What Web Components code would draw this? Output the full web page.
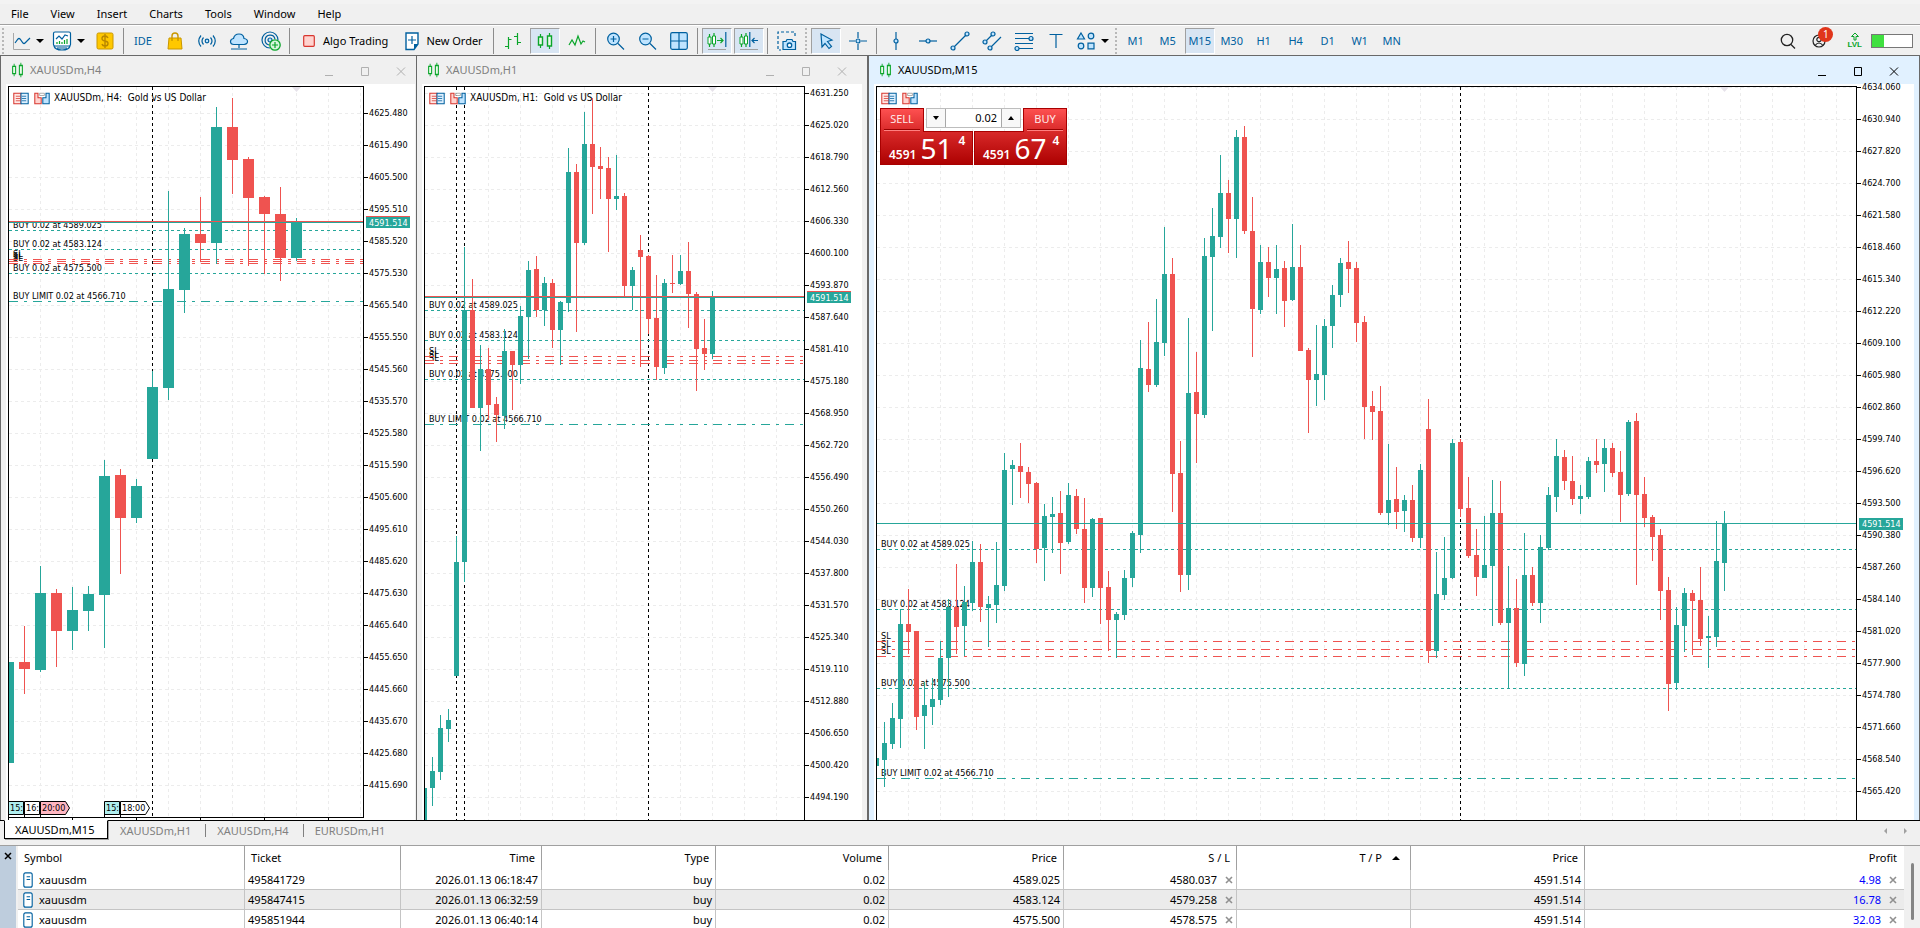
<!DOCTYPE html>
<html lang="en">
<head>
<meta charset="utf-8">
<title>Trading Terminal</title>
<style>
  html, body { height: 100%; margin: 0; }
  body { font: 11px/16px "Noto Sans", "Open Sans", sans-serif; color: #000; background: #f0f0f0; overflow: hidden; }
</style>
</head>
<body>
<trading-terminal></trading-terminal>

<script>
const GREEN = '#26a69a', RED = '#ef5350';

/* Toolbar and window icons, drawn on a 20 x 20 grid. */
const B = 'fill="none" stroke="#00609f" stroke-width="1.2"';
const BF = 'fill="#bfe4ff" stroke="#00609f" stroke-width="1.2"';
const G = 'fill="none" stroke="#0aa52a" stroke-width="1.2"';
const ICONS = {
  line: `<path d="M2.500 2V18.500H19" fill="none" stroke="#a8a8a8"/><path d="M4 12l3-4q1-1 2 0l3 4q1 1 2 0l5-5" ${B}/>`,
  template: `<rect x="1.500" y="1" width="17" height="14" rx="1.500" fill="#fff" stroke="#00609f" stroke-width="1.200"/><path d="M4 8l3-3 3 3 3-4 3 1" ${B}/><path d="M5 13v-2M7.500 13v-3M10 13v-2M12.500 13V9M15 13V8" ${G}/><path d="M2 15q1 4 8 4t8-4M5 17h10" ${B}/>`,
  coin: `<rect x="2" y="2" width="16" height="16" rx="1.500" fill="#ffc800" stroke="#c99700"/><path d="M13 7q-1-2-3-2-3 0-3 2.500Q7 9.500 10 10t3 2.500Q13 15 10 15q-2.500 0-3-2M10 3v14" fill="none" stroke="#b98700" stroke-width="1.400"/>`,
  bag: `<path d="M4 7h12l1 11H3z" fill="#ffc800" stroke="#c99700"/><path d="M7 10V5q0-3 3-3t3 3v5" fill="none" stroke="#c99700" stroke-width="1.400"/>`,
  signal: `<circle cx="10" cy="10" r="1.800" ${BF}/><path d="M6.500 13.500q-3-3.500 0-7M13.500 13.500q3-3.500 0-7M4 15.500q-4.500-5.500 0-11M16 15.500q4.500-5.500 0-11" ${B}/>`,
  cloud: `<path d="M5 13.500q-3.500 0-3.500-3 0-2.500 3-3 1-4.500 5.500-4.500t5 4.500q3.500.5 3.500 3t-3.500 3z" ${BF}/><path d="M10 14v3M2 18h16" ${B}/>`,
  radar: `<path d="M9 17A8 8 0 1 1 17 9M8 14A5 5 0 1 1 14 8" ${B}/><circle cx="9" cy="9" r="2" ${BF}/><circle cx="14" cy="14" r="5.200" fill="#d7f5dc" stroke="#0aa52a" stroke-width="1.300"/><path d="M14 11v6M11 14h6" ${G}/>`,
  stop: `<rect x="4.700" y="4.700" width="10.600" height="10.600" rx="1" fill="#ffd3cf" stroke="#d8362f" stroke-width="1.200"/>`,
  order: `<path d="M4 2h12v11l-4 5.500H4z" fill="#fff" stroke="#00609f" stroke-width="1.400"/><path d="M16 13l-4 5.500V13z" fill="#00609f"/><path d="M10 5v8M6 9h8" ${B}/>`,
  bars: `<path d="M5.500 6v12M2 15.500h3.500M5.500 8.500h3M14.500 2v12M11 5.500h3.500M14.500 11.500H18" ${G}/>`,
  candles: `<path d="M5.500 3v14M14.500 2v16" ${G}/><path d="M3.500 6h4v8h-4zM12.500 5h4v10h-4z" fill="#e8fbe9" stroke="#0aa52a" stroke-width="1.400"/>`,
  wave: `<path d="M2 14l3-5 3 5 3-9 3 8 2-3 2 1" ${G}/>`,
  zoomin: `<circle cx="8.500" cy="8" r="5.800" ${BF}/><path d="M13 12.500l6 6M5.500 8h6M8.500 5v6" ${B}/>`,
  zoomout: `<circle cx="8.500" cy="8" r="5.800" ${BF}/><path d="M13 12.500l6 6M5.500 8h6" ${B}/>`,
  tile: `<rect x="1.700" y="1.700" width="16.600" height="16.600" rx="1.500" ${BF}/><path d="M10 2v16M2 10h16" ${B}/>`,
  scroll: `<path d="M2.500 3v13M7 2v14" ${G}/><path d="M1 6h3v7H1zM5.500 5h3v8h-3z" fill="#fff" stroke="#0aa52a"/><path d="M10 9.500h6M13.500 7l2.500 2.500-2.500 2.500" ${G}/><path d="M18.800 1v15" ${B}/><path d="M1 18.500h18" stroke="#a0a0a0"/>`,
  shift: `<path d="M2.500 3v13M7 2v14" ${G}/><path d="M1 6h3v7H1zM5.500 5h3v8h-3z" fill="#fff" stroke="#0aa52a"/><path d="M10.800 1v15M19 9.500h-6M15.500 7L13 9.500l2.500 2.500" ${B}/><path d="M1 18.500h18" stroke="#a0a0a0"/>`,
  camera: `<path d="M1 8V1h17v6M1 10v9h3" fill="none" stroke="#00609f" stroke-width="1.200" stroke-dasharray="3 2"/><path d="M6 10.500h3l1-2h5l1 2h2.500v8H6z" ${BF}/><circle cx="12.500" cy="14.200" r="2.200" fill="#fff" stroke="#00609f" stroke-width="1.300"/>`,
  cursor: `<path d="M5 3l11 6-4.500 1.500 4 5-2.500 2-4-5L6 16z" ${BF}/>`,
  cross: `<path d="M10 1v6M10 13v6M1 10h6M13 10h6" ${B}/><circle cx="10" cy="10" r="2" ${BF}/>`,
  vline: `<path d="M10 1v18" ${B}/><circle cx="10" cy="10" r="2" ${BF}/>`,
  hline: `<path d="M1 10h18" ${B}/><circle cx="10" cy="10" r="2" ${BF}/>`,
  trend: `<path d="M3 17L17 3" ${B}/><circle cx="3" cy="17" r="2" ${BF}/><circle cx="17" cy="3" r="2" ${BF}/>`,
  channel: `<path d="M3 11l8-8M8 17L19 6" ${B}/><circle cx="3" cy="11" r="2" ${BF}/><circle cx="11" cy="3" r="2" ${BF}/><circle cx="8" cy="17" r="2" ${BF}/>`,
  fibo: `<path d="M1 2.500h18M1 7.500h18M1 12.500h18M3 17.500h16" ${B}/><circle cx="17" cy="7.500" r="2" ${BF}/><circle cx="3" cy="17.500" r="2" ${BF}/>`,
  text: `<path d="M3.500 3.500h13M10 3.500V17" ${B}/>`,
  shapes: `<path d="M5 2l3.500 6h-7z" ${BF}/><circle cx="15" cy="5" r="2.800" ${BF}/><circle cx="5" cy="15" r="2.800" ${BF}/><path d="M12 12.200h6v5.600h-6z" ${BF}/>`,
  search: `<circle cx="9" cy="9" r="5.700" fill="none" stroke="#222" stroke-width="1.300"/><path d="M13 13.500l4 4" stroke="#222" stroke-width="1.300"/>`,
  user: `<circle cx="9" cy="10" r="6" fill="none" stroke="#222" stroke-width="1.200"/><circle cx="9" cy="8.500" r="2.200" fill="none" stroke="#222" stroke-width="1.200"/><path d="M5 14.500q4-5 8 0" fill="none" stroke="#222" stroke-width="1.200"/>`,
  depth: `<path d="M1 3h9v14H1z" fill="#ffe9e6" stroke="#d8362f" stroke-width="1.300"/><path d="M10 3h9v14h-9z" fill="#dff1ff" stroke="#00609f" stroke-width="1.300"/><path d="M3.500 7h6M3.500 10h6M3.500 13h6" stroke="#d8362f"/><path d="M11 7h5.500M11 10h5.500M11 13h5.500" stroke="#00609f"/>`,
  deals: `<path d="M1 3h4v6h4v8H1z" fill="#ffd3cf" stroke="#d8362f" stroke-width="1.300"/><path d="M19 3h-4v6h-4v8h8z" fill="#bfe4ff" stroke="#00609f" stroke-width="1.300"/><path d="M7 3h6v3H7z" fill="#fff" stroke="#999"/>`,
  doc: `<rect x="4" y="1" width="12" height="18" rx="2.500" fill="#fff" stroke="#00609f" stroke-width="1.600"/><path d="M8 6h5M8 9.500h5" stroke="#00609f" stroke-width="1.300"/>`
};
const icon = (name, w = 20, h = w) =>
  `<svg class="icon" width="${w}" height="${h}" viewBox="0 0 20 20" preserveAspectRatio="none" aria-hidden="true">${ICONS[name]}</svg>`;

class BaseElement extends HTMLElement {
  connectedCallback() {
    if (this.shadowRoot) return;
    this.attachShadow({ mode: 'open' }).innerHTML =
      `<style>*{box-sizing:border-box}button{font:inherit;color:inherit;background:none;border:0;padding:0;margin:0}${this.styles()}</style>${this.markup()}`;
  }
}

customElements.define('trading-terminal', class extends BaseElement {
  styles() {
    return `
      :host { display: flex; flex-direction: column; height: 100vh; }
      main { flex: 1; min-height: 0; display: grid; grid-template-columns: 416fr 451fr 1053fr; grid-template-rows: minmax(0, 1fr); overflow: hidden; }
      positions-table { height: 82px; }
      .h4 { --axis: 51px; --end: 1px; --controls-end: 9px; --first: 13px; --quote: 132px; }
      .h1 { --controls-end: 19px; --first: -7px; --quote: 207px; }
      .m15 { --edge: 2px; --edge-end: 1px; --controls-end: 19px; --first: -13px; --quote: 434px; --frame: #e1f1ff; --title: #000; --control: #000; }`;
  }
  markup() {
    return `
      <menu-bar></menu-bar>
      <tool-bar></tool-bar>
      <main>
        <chart-window class="h4">XAUUSDm,H4<price-chart slot="chart" chart="h4"></price-chart></chart-window>
        <chart-window class="h1">XAUUSDm,H1<price-chart slot="chart" chart="h1"></price-chart></chart-window>
        <chart-window class="m15">XAUUSDm,M15<price-chart slot="chart" chart="m15"></price-chart></chart-window>
      </main>
      <chart-tabs></chart-tabs>
      <positions-table></positions-table>`;
  }
});

customElements.define('menu-bar', class extends BaseElement {
  styles() {
    return `
      :host { display: block; background: #f0f0f0; border-top: 4px solid #f3f3f3; border-bottom: 1px solid #a0a0a0; }
      nav { display: flex; gap: 22px; height: 20px; padding-left: 11px; align-items: center; }`;
  }
  markup() {
    return `<nav aria-label="Main menu">${['File', 'View', 'Insert', 'Charts', 'Tools', 'Window', 'Help'].map(t => `<button>${t}</button>`).join('')}</nav>`;
  }
});

/* One toolbar button; 30px of face in a 32px cell unless "wide" content is passed in. */
customElements.define('tool-button', class extends BaseElement {
  styles() {
    return `
      :host { display: block; flex: none; width: 32px; padding: 0 1px; box-sizing: border-box; color: #00609f; }
      :host([caret]) { width: 41px; }
      :host([wide]) { width: auto; color: #000; }
      button { display: flex; align-items: center; justify-content: center; width: 100%; height: 26px; white-space: nowrap; }
      :host([caret]) button { gap: 5px; }
      :host([wide]) button { padding: 0 7px 0 5px; gap: 4px; }
      :host([on]) button { background: #d8e5f3; border: 1px solid; border-color: #a0a0a0 #fff #fff #a0a0a0; }
      .caret { border: 4px solid transparent; border-top: 4px solid #000; border-bottom: 0; }
      .icon { flex: none; }`;
  }
  markup() {
    const n = this.getAttribute('icon');
    return `<button aria-label="${this.getAttribute('label') || this.textContent}">${n ? icon(n) : ''}<slot></slot>${this.hasAttribute('caret') ? '<span class="caret"></span>' : ''}</button>`;
  }
});

customElements.define('tool-bar', class extends BaseElement {
  styles() {
    return `
      :host { display: flex; align-items: center; height: 31px; background: #f0f0f0; border-top: 1px solid #fff; border-bottom: 1px solid #696969; }
      hr { width: 1px; height: 26px; margin: 0 3px 0 2px; border: 0; background: #8c8c8c; flex: none; }
      .grip { flex: none; width: 2px; height: 26px; margin: 0 3px 0 2px; background: repeating-linear-gradient(#b8b8b8 0 2px, transparent 2px 4px); }
      .space { flex: 1; }
      .right { display: flex; align-items: center; padding-right: 7px; color: #000; }
      .right button { display: flex; position: relative; }
      .badge { position: absolute; left: 8px; top: -4px; width: 15px; height: 15px; border-radius: 8px; background: #e0351b; color: #fff; font-size: 10px; line-height: 15px; text-align: center; }
      .level { display: flex; flex-direction: column; align-items: center; font: bold 8px/8px "Liberation Sans", sans-serif; color: #0aa52a; }
      .meter { width: 42px; height: 14px; margin-left: 9px; border: 1px solid #777; background: #fff; }
      .meter span { display: block; width: 30%; height: 100%; background: #40e040; }`;
  }
  markup() {
    const b = (n, l, a = '') => `<tool-button icon="${n}" label="${l}" ${a}></tool-button>`;
    const g = '<span class="grip"></span>', s = '<hr>';
    const frames = ['M1', 'M5', 'M15', 'M30', 'H1', 'H4', 'D1', 'W1', 'MN'];
    return g + b('line', 'Line chart', 'caret') + b('template', 'Templates', 'caret') + b('coin', 'Market') + s +
      '<tool-button>IDE</tool-button>' + b('bag', 'Store') + b('signal', 'Signals') + b('cloud', 'Virtual hosting') + b('radar', 'Add broker') + s +
      '<tool-button wide icon="stop">Algo Trading</tool-button><tool-button wide icon="order">New Order</tool-button>' + s +
      b('bars', 'Bar chart') + b('candles', 'Candlesticks', 'on') + b('wave', 'Line') + s +
      b('zoomin', 'Zoom in') + b('zoomout', 'Zoom out') + b('tile', 'Tile windows') + s +
      b('scroll', 'Auto scroll', 'on') + b('shift', 'Chart shift', 'on') + s + b('camera', 'Screenshot') + g +
      b('cursor', 'Cursor', 'on') + b('cross', 'Crosshair') + s +
      b('vline', 'Vertical line') + b('hline', 'Horizontal line') + b('trend', 'Trendline') + b('channel', 'Channel') +
      b('fibo', 'Fibonacci') + b('text', 'Text') + b('shapes', 'Shapes', 'caret') + g +
      frames.map(f => `<tool-button ${f === 'M15' ? 'on' : ''}>${f}</tool-button>`).join('') +
      `<span class="space"></span><div class="right">
        <button aria-label="Search" style="margin-right:12px">${icon('search')}</button>
        <button aria-label="Account" style="margin-right:17px">${icon('user')}<span class="badge">1</span></button>
        <div class="level"><svg width="10" height="9" viewBox="0 0 10 9"><path d="M5 1L1.500 4.500H4V8h2V4.500h2.500z" fill="none" stroke="#0aa52a"/></svg>LVL</div>
        <div class="meter" role="meter" aria-valuenow="30" aria-valuemin="0" aria-valuemax="100" aria-label="Connection"><span></span></div>
      </div>`;
  }
});

customElements.define('chart-window', class extends BaseElement {
  styles() {
    return `
      :host { display: flex; flex-direction: column; min-width: 0; overflow: hidden; background: var(--frame, #f0f0f0);
        border-left: var(--edge, 1px) solid #696969; border-right: var(--edge-end, 0) solid #696969; }
      header { flex: none; display: flex; align-items: center; height: 28px; padding: 0 var(--controls-end) 0 9px; gap: 5px; color: var(--title, #808080); }
      h2 { flex: 1; margin: 0; font: inherit; }
      header button { width: 12px; height: 12px; margin: 4px 0 0 19px; color: var(--control, #b0b0b0); }
      header svg { display: block; }
      ::slotted(price-chart) { flex: 1; min-height: 0; margin: 0 var(--end, 5px) 0 5px; }`;
  }
  markup() {
    const c = (l, d) => `<button aria-label="${l}"><svg width="12" height="12" viewBox="0 0 12 12"><path d="${d}" fill="none" stroke="currentColor"/></svg></button>`;
    return `<header>${icon('candles', 15, 18)}<h2><slot></slot></h2>${c('Minimize', 'M2 9.500h8')}${c('Maximize', 'M2.500 1.500h7v8h-7z')}${c('Close', 'M2 1.500l8 8M10 1.500l-8 8')}</header><slot name="chart"></slot>`;
  }
});

/*
 * Chart data. "origin" is the terminal-space position of the plot's corner;
 * each candle is: direction (u/d), high, body top, body bottom, low.
 */
const CHARTS = {
  h4: {
    title: 'XAUUSDm, H4:\u00a0 Gold vs US Dollar', origin: [9, 87], from: 4625.48, step: 9.99, labels: 22,
    x0: 8, dx: 16, body: 11, gridX: 8, gridY: 113, days: [152], mark: 296, ask: 221, bid: 222,
    buys: [[230, '4589.025'], [249, '4583.124'], [273, '4575.500']], stops: [259, 261, 263], limit: 301,
    tags: [[8, 15, '15:', '#afeeee'], [24, 15, '16:', '#fff'], [40, 25, '20:00', '#ffb6c1', 1], [104, 15, '15:', '#afeeee'], [120, 25, '18:00', '#fff', 1]],
    candles: `u662,662,763,763 d626,662,669,694 u566,593,670,672 d589,593,631,667 u587,610,631,650 u586,594,611,631 u460,476,595,648
      d469,475,518,574 u479,486,518,523 u371,387,459,459 u191,289,388,400 u228,234,290,313 d197,234,243,262 u107,127,243,264
      d98,127,160,194 d157,159,198,266 d196,197,214,274 d187,214,258,281 u218,222,258,261`
  },
  h1: {
    title: 'XAUUSDm, H1:\u00a0 Gold vs US Dollar', origin: [425, 87], from: 4631.25, step: 6.23, labels: 23,
    x0: 424, dx: 8, body: 5, gridX: 424, gridY: 93, days: [456, 464, 648], mark: 712, ask: 296, bid: 297,
    buys: [[310, '4589.025'], [340, '4583.124'], [379, '4575.500']], stops: [356, 360, 363], limit: 424,
    candles: `u788,788,830,830 u757,771,788,806 u715,728,772,780 u709,720,729,742 u536,562,676,676 u247,310,562,582 d279,310,408,408
      u345,369,408,451 d348,369,405,420 d397,404,415,442 u329,351,416,429 d351,351,365,410 u306,316,365,384 u261,270,317,359
      d256,269,310,317 u277,283,310,326 d279,283,330,348 u301,302,330,365 u148,172,303,312 d164,172,243,332 u112,144,243,245
      d98,144,167,214 d147,166,169,199 d157,168,199,252 u155,196,199,210 d193,196,286,298 u267,270,286,310 d235,250,257,367
      d255,256,319,334 d275,318,367,380 u279,283,368,374 d255,283,284,293 u255,271,284,285 d242,271,294,328 d292,294,349,391
      d319,348,354,370 u291,297,354,359`
  },
  m15: {
    origin: [877, 87], from: 4634.06, step: 3.12, labels: 23,
    x0: 876, dx: 8, body: 5, gridX: 876, gridY: 87, days: [1460], mark: 1724, bid: 523,
    buys: [[549, '4589.025'], [609, '4583.124'], [688, '4575.500']], stops: [641, 649, 656], limit: 778,
    candles: `u758,758,766,766 u722,743,760,787 u703,718,744,749 u609,624,719,748 d589,624,632,654 d631,631,717,730 u682,705,716,749
      u678,699,707,725 u641,658,700,705 u599,607,658,697 d564,607,627,654 u586,602,626,656 u541,562,603,611 d544,562,607,622
      u596,604,608,647 u542,585,605,623 u453,470,586,591 u460,465,469,505 d443,466,472,498 d467,472,484,503 d482,483,549,563
      u504,516,548,581 u497,514,517,553 d491,513,543,574 u483,495,542,544 d489,496,529,534 d498,529,588,603 u518,519,588,597
      d518,518,588,624 d571,587,620,651 u612,614,620,658 u570,578,615,620 u531,533,578,587 u340,368,535,553 d322,369,385,392
      u299,342,385,387 u227,274,343,356 d258,274,474,512 d441,473,575,592 u318,393,575,590 d352,392,414,463 u238,256,415,418
      u208,236,257,331 u155,193,237,248 d180,193,219,253 u130,137,219,258 d126,137,231,234 d197,231,309,357 u245,262,310,314
      d247,262,278,297 u245,269,278,314 d261,268,301,327 u224,267,300,301 d245,267,351,351 d348,350,380,433 u325,374,380,406
      u319,326,375,400 u285,295,326,348 u258,263,295,307 d241,262,269,293 d262,268,323,342 d316,322,407,439 d391,406,412,440
      d386,411,513,515 u444,500,513,525 d467,499,512,529 u495,500,511,532 d485,500,538,542 u464,470,538,548 d399,429,651,663
      u552,594,651,658 u537,578,595,600 u439,443,578,579 d439,442,509,517 d477,508,556,558 d529,555,577,596 u516,565,578,578
      u480,513,566,626 d481,513,623,625 u566,608,623,689 d579,608,663,667 u533,575,664,676 d567,575,603,606 u535,547,603,623
      u487,495,548,550 u439,456,497,512 d450,457,481,490 d456,481,499,505 u485,496,499,514 u457,461,497,499 d439,461,465,473
      u439,448,464,492 d443,448,473,477 d451,472,495,522 u420,422,494,496 d413,421,495,585 d477,494,518,527 d515,517,537,561
      d529,535,591,620 d577,590,684,711 u607,625,683,690 u588,593,626,652 d590,593,601,655 d567,600,639,646 u616,636,638,668
      u521,561,637,647 u511,523,563,591`
  }
};

customElements.define('price-chart', class extends BaseElement {
  get data() { return CHARTS[this.getAttribute('chart')]; }
  styles() {
    return `
      :host { display: grid; grid-template-columns: minmax(0, 1fr) var(--axis, 57px); background: #fff; padding: 2px 0 0 2px;
        font: 9px/12px "DejaVu Sans Condensed", "DejaVu Sans", sans-serif; color: #000; position: relative; }
      .left { display: flex; flex-direction: column; min-height: 0; }
      .plot { flex: 1; min-height: 0; border: 1px solid #000; border-bottom: 0; position: relative; overflow: hidden; }
      .plot.closed { border-bottom: 1px solid #000; }
      .plot > svg { display: block; width: 100%; height: 100%; }
      .title { font-size: 10px; }
      .times { height: 2px; background: repeating-linear-gradient(90deg, #000 0 1px, transparent 1px 64px); }
      .tools { position: absolute; left: 4px; top: 4px; display: flex; gap: 5px; }
      .tools button { display: flex; }
      trade-panel { position: absolute; left: 3px; top: 21px; }
      .axis { min-height: 0; }
      ol { list-style: none; padding: 0; margin: calc(var(--first) - 2px) 0 0; height: 0; }
      li { height: 32px; line-height: 32px; display: flex; align-items: center; gap: 1px; }
      li::before { content: ""; width: 4px; height: 1px; background: #000; }
      output { position: absolute; right: calc(var(--axis, 57px) - 46px); top: var(--quote); width: 44px; height: 12px; padding-left: 3px; background: ${GREEN}; color: #fff; line-height: 12px; }
      output.ask { border-top: 1px solid ${RED}; }`;
  }
  markup() {
    const d = this.data, [ox, oy] = d.origin;
    const rect = (x, y, w, h, c) => `<rect x="${x}" y="${y}" width="${w}" height="${h}" fill="${c}"/>`;
    const line = (x1, y1, x2, y2, c, dash) => `<path d="M${x1} ${y1}L${x2} ${y2}" stroke="${c}" ${dash ? `stroke-dasharray="${dash}"` : ''}/>`;
    const H = y => [ox, y + .5, ox + 4000, y + .5], V = x => [x + .5, oy, x + .5, oy + 4000];
    let s = '';
    for (let i = 1; i < 31; i++) s += line(...V(d.gridX + 32 * i), '#ececec', '3 3');
    for (let i = 0; i < d.labels; i++) s += line(...H(d.gridY + 32 * i), '#ececec', '3 3');
    d.days.forEach(x => s += line(...V(x), '#000', '3 3'));
    const label = (y, t) => `<text x="${ox + 4}" y="${y - 2}">${t}</text>`;
    d.buys.forEach(([y, p]) => s += label(y, `BUY 0.02 at ${p}`));
    d.stops.forEach(y => s += label(y, 'SL'));
    s += label(d.limit, 'BUY LIMIT 0.02 at 4566.710');
    if (d.title) s += `<text class="title" x="${ox + 45}" y="101">${d.title}</text>`;
    d.buys.forEach(([y]) => s += line(...H(y), GREEN, '3 3'));
    d.stops.forEach(y => s += line(...H(y), RED, '9 6 3 6'));
    s += line(...H(d.limit), GREEN, '9 6 3 6');
    d.candles.trim().split(/\s+/).forEach((t, i) => {
      const c = t[0] === 'u' ? GREEN : RED, [hi, top, bot, lo] = t.slice(1).split(',').map(Number), x = d.x0 + d.dx * i;
      s += rect(x, hi, 1, lo - hi, c) + rect(x - (d.body - 1) / 2, top, d.body, Math.max(1, bot - top), c);
    });
    if (d.ask) s += line(...H(d.ask), RED);
    s += line(...H(d.bid), GREEN);
    s += `<path d="M${d.mark - 4} ${oy}h9l-4.500 5z" fill="#e6e2ea"/>`;
    (d.tags || []).forEach(([x, w, t, c, arrow]) => {
      s += `<path d="M${x + .5} 817V801.500h${w}${arrow ? 'l4 6.500-4 6.500' : 'v13'}H${x + .5}" fill="${c}" stroke="#000"/><text x="${x + 2}" y="811">${t}</text>`;
    });
    let axis = '';
    for (let i = 0; i < d.labels; i++) axis += `<li>${(d.from - d.step * i).toFixed(3)}</li>`;
    const closed = !!d.tags;
    return `<div class="left"><div class="plot ${closed ? 'closed' : ''}">
        <svg><g transform="translate(${-ox} ${-oy})" fill="#000">${s}</g></svg>
        <div class="tools"><button aria-label="Depth of market">${icon('depth', 16, 15)}</button><button aria-label="Trade levels">${icon('deals', 16, 15)}</button></div>
        ${d.title ? '' : '<trade-panel></trade-panel>'}
      </div>${closed ? '<div class="times"></div>' : ''}</div>
      <div class="axis"><ol>${axis}</ol></div><output class="${d.ask ? 'ask' : ''}">4591.514</output>`;
  }
});

customElements.define('trade-panel', class extends BaseElement {
  styles() {
    return `
      :host { display: grid; grid-template-columns: 44px 49px 1px 49px 44px; grid-template-rows: 23px 34px; width: 187px; font: 11px/16px "Noto Sans", sans-serif; }
      .deal { grid-row: 1 / 3; position: relative; width: 93px; height: 57px; background: #a80000; color: #fff; display: block; }
      .sell { grid-column: 1 / 3; clip-path: polygon(0 0, 44px 0, 44px 23px, 100% 23px, 100% 100%, 0 100%); }
      .buy { grid-column: 4 / 6; clip-path: polygon(49px 0, 100% 0, 100% 100%, 0 100%, 0 23px, 49px 23px); }
      .face { position: absolute; inset: 0; background: linear-gradient(#ff5252, #d92a2a 40%, #ac0000); }
      .sell .face { clip-path: polygon(1px 1px, 43px 1px, 43px 24px, 92px 24px, 92px 56px, 1px 56px); }
      .buy .face { clip-path: polygon(50px 1px, 92px 1px, 92px 56px, 1px 56px, 1px 24px, 50px 24px); }
      .side { position: absolute; top: 0; width: 36px; height: 22px; line-height: 21px; text-align: center; border-bottom: 1px solid #900; box-shadow: 0 1px #ff8080; color: #ffe8e8; }
      .sell .side { left: 4px; } .buy .side { right: 4px; }
      .price { position: absolute; left: 9px; right: 4px; bottom: 2px; height: 30px; display: flex; gap: 4px; align-items: flex-end; font-weight: 600; font-size: 12px; }
      .price b { font-size: 28px; line-height: 30px; font-weight: 400; }
      .price i { font-style: normal; align-self: flex-start; margin-left: 2px; }
      .volume { grid-column: 2 / 5; grid-row: 1; z-index: 1; display: flex; width: 95px; justify-self: center; height: 20px; border: 1px solid #bdbdbd; background: #fff; }
      .volume button { width: 18px; background: #f8f8f8; display: flex; align-items: center; justify-content: center; }
      input { flex: 1; min-width: 0; border: 1px solid #a8a8a8; border-width: 0 1px; padding: 0 4px; margin: 0; font: inherit; text-align: right; outline: 0; }
      .down { border: 3px solid transparent; border-top: 4px solid #000; border-bottom: 0; }
      .up { border: 3px solid transparent; border-bottom: 4px solid #000; border-top: 0; }`;
  }
  markup() {
    return `
      <button class="deal sell"><span class="face"></span><span class="side">SELL</span><span class="price">4591<b>51</b><i>4</i></span></button>
      <button class="deal buy"><span class="face"></span><span class="side">BUY</span><span class="price">4591<b>67</b><i>4</i></span></button>
      <div class="volume"><button aria-label="Decrease volume"><span class="down"></span></button><input aria-label="Volume" value="0.02"><button aria-label="Increase volume"><span class="up"></span></button></div>`;
  }
});

customElements.define('chart-tabs', class extends BaseElement {
  styles() {
    return `
      :host { display: flex; justify-content: space-between; height: 26px; border-top: 1px solid #000; border-bottom: 1px solid #a0a0a0; background: #f0f0f0; color: #808080; }
      nav { display: flex; align-items: flex-start; padding-left: 4px; }
      nav button { height: 19px; padding: 0 14px 0 12px; position: relative; }
      nav button.on { margin-top: -1px; width: 104px; background: #fff; color: #000; border: 1px solid #000; border-top-color: #fff; box-shadow: 1px 1px #a0a0a0; padding: 0 10px; text-align: left; }
      nav button + button + button::before { content: ""; position: absolute; left: 0; top: 3px; height: 13px; width: 1px; background: #808080; }
      .scroll { display: flex; gap: 17px; align-items: center; padding: 0 13px 5px 0; }
      .l, .r { border: 3px solid transparent; width: 0; height: 0; }
      .l { border-right: 3px solid #a0a0a0; border-left: 0; } .r { border-left: 3px solid #a0a0a0; border-right: 0; }`;
  }
  markup() {
    return `<nav aria-label="Charts"><button class="on">XAUUSDm,M15</button><button>XAUUSDm,H1</button><button>XAUUSDm,H4</button><button>EURUSDm,H1</button></nav>
      <div class="scroll"><button class="l" aria-label="Scroll left"></button><button class="r" aria-label="Scroll right"></button></div>`;
  }
});

customElements.define('positions-table', class extends BaseElement {
  styles() {
    return `
      :host { display: grid; grid-template-columns: 18px minmax(0, 1fr) 16px; overflow: hidden; background: #fff; }
      .strip { background: #becddd; border-right: 2px solid #f0f0f0; }
      .strip button { width: 16px; height: 20px; display: flex; align-items: center; justify-content: center; }
      table { width: 100%; table-layout: fixed; border-collapse: separate; border-spacing: 0; }
      th, td { padding: 0 5px; text-align: right; font-weight: 400; white-space: nowrap; overflow: hidden; border-right: 1px solid #c4c4c4; }
      th { height: 24px; border-right-color: #a0a0a0; padding: 0 6px; }
      td { height: 20px; border-bottom: 1px solid #c4c4c4; padding: 0 3px; }
      th:nth-child(-n+2), td:nth-child(-n+2) { text-align: left; }
      th:last-child, td:last-child { border-right: 0; padding-right: 7px; }
      tr:nth-child(even) td { background: #ebebeb; }
      .cell { display: flex; align-items: center; gap: 4px; }
      .end { justify-content: flex-end; gap: 8px; }
      .profit { color: #00f; }
      .x { color: #909090; display: flex; }
      .sort { display: inline-block; margin: 0 4px 2px 10px; border: 4px solid transparent; border-bottom: 4px solid #000; border-top: 0; }
      .bar { background: #f0f0f0; padding: 17px 6px 8px 7px; }
      .thumb { height: 57px; border-radius: 2px; background: #858585; }`;
  }
  markup() {
    const cols = [227, 156, 141, 174, 173, 175, 173, 174, 174, 319];
    const x = `<button class="x" aria-label="Remove"><svg width="8" height="8" viewBox="0 0 8 8"><path d="M1 1l6 6M7 1L1 7" stroke="currentColor" stroke-width="1.600"/></svg></button>`;
    const rows = [['495841729', '06:18:47', '4589.025', '4580.037', '4.98'], ['495847415', '06:32:59', '4583.124', '4579.258', '16.78'], ['495851944', '06:40:14', '4575.500', '4578.575', '32.03']];
    return `<div class="strip"><button aria-label="Close"><svg width="8" height="8" viewBox="0 0 8 8"><path d="M1 1l6 6M7 1L1 7" stroke="#000" stroke-width="1.500"/></svg></button></div>
      <table><colgroup>${cols.map(c => `<col style="width:${(c / 18.86).toFixed(2)}%">`).join('')}</colgroup>
      <thead><tr><th>Symbol</th><th>Ticket</th><th>Time</th><th>Type</th><th>Volume</th><th>Price</th><th>S / L</th><th>T / P<span class="sort"></span></th><th>Price</th><th>Profit</th></tr></thead>
      <tbody>${rows.map(r => `<tr><td><span class="cell">${icon('doc', 14, 16)}xauusdm</span></td><td>${r[0]}</td><td>2026.01.13 ${r[1]}</td><td>buy</td><td>0.02</td><td>${r[2]}</td><td><span class="cell end">${r[3]}${x}</span></td><td></td><td>4591.514</td><td class="profit"><span class="cell end">${r[4]}${x}</span></td></tr>`).join('')}</tbody></table>
      <div class="bar"><div class="thumb"></div></div>`;
  }
});
</script>
</body>
</html>
